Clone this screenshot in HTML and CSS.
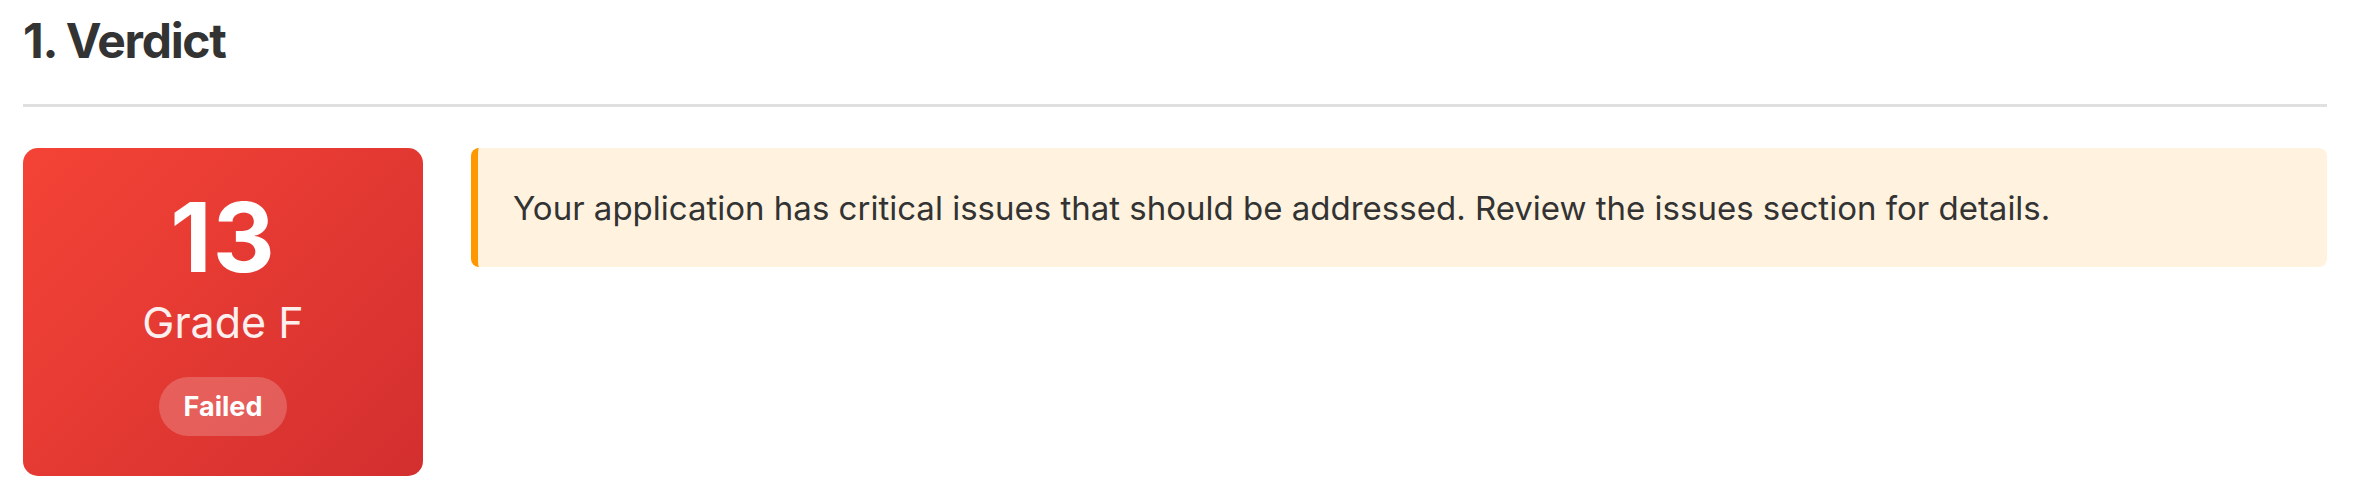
FILE: index.html
```html
<!DOCTYPE html>
<html lang="en">
<head>
<meta charset="utf-8">
<title>Verdict</title>
<link rel="stylesheet" href="styles.css">
</head>
<body>
<section class="section">
  <h1 class="section-title">1. Verdict</h1>
  <div class="verdict">
    <div class="score-card">
      <div class="score">13</div>
      <div class="grade">Grade F</div>
      <span class="status-pill">Failed</span>
    </div>
    <div class="alert">
      <p class="alert-text">Your application has critical issues that should be addressed. Review the issues section for details.</p>
    </div>
  </div>
</section>
</body>
</html>
```

FILE: styles.css
```css
html, body {
  margin: 0;
  padding: 0;
  background: #ffffff;
}

body {
  font-family: Inter, "Noto Sans", "Liberation Sans", sans-serif;
  color: #333333;
}

.section {
  padding: 0 29px 0 23px;
}

.section-title {
  margin: 0;
  padding: 12px 0 34px;
  font-size: 48px;
  line-height: 58px;
  font-weight: 700;
  color: #333333;
  border-bottom: 3px solid #e0e0e0;
  letter-spacing: -1.3px;
}

.verdict {
  display: flex;
  align-items: flex-start;
  gap: 48px;
  margin-top: 41px;
}

.score-card {
  flex: 0 0 400px;
  box-sizing: border-box;
  height: 328px;
  padding-top: 41px;
  display: flex;
  flex-direction: column;
  align-items: center;
  border-radius: 15px;
  background: linear-gradient(135deg, #f44336 0%, #d32f2f 100%);
  color: #ffffff;
}

.score {
  font-size: 96px;
  line-height: 96px;
  font-weight: 700;
  letter-spacing: 1px;
}

.grade {
  margin-top: 11px;
  font-size: 43px;
  line-height: 52px;
  font-weight: 400;
  opacity: 0.92;
}

.status-pill {
  margin-top: 29px;
  box-sizing: border-box;
  width: 128px;
  height: 59px;
  display: flex;
  align-items: center;
  justify-content: center;
  border-radius: 30px;
  background: rgba(255, 255, 255, 0.2);
  font-size: 27px;
  font-weight: 700;
}

.alert {
  flex: 1 1 auto;
  box-sizing: border-box;
  height: 119px;
  display: flex;
  align-items: center;
  padding: 0 35px;
  border-left: 7px solid #ff9800;
  border-radius: 8px;
  background: #fff3e0;
}

.alert-text {
  margin: 0;
  font-size: 33px;
  line-height: 48px;
  color: #333333;
}
```
